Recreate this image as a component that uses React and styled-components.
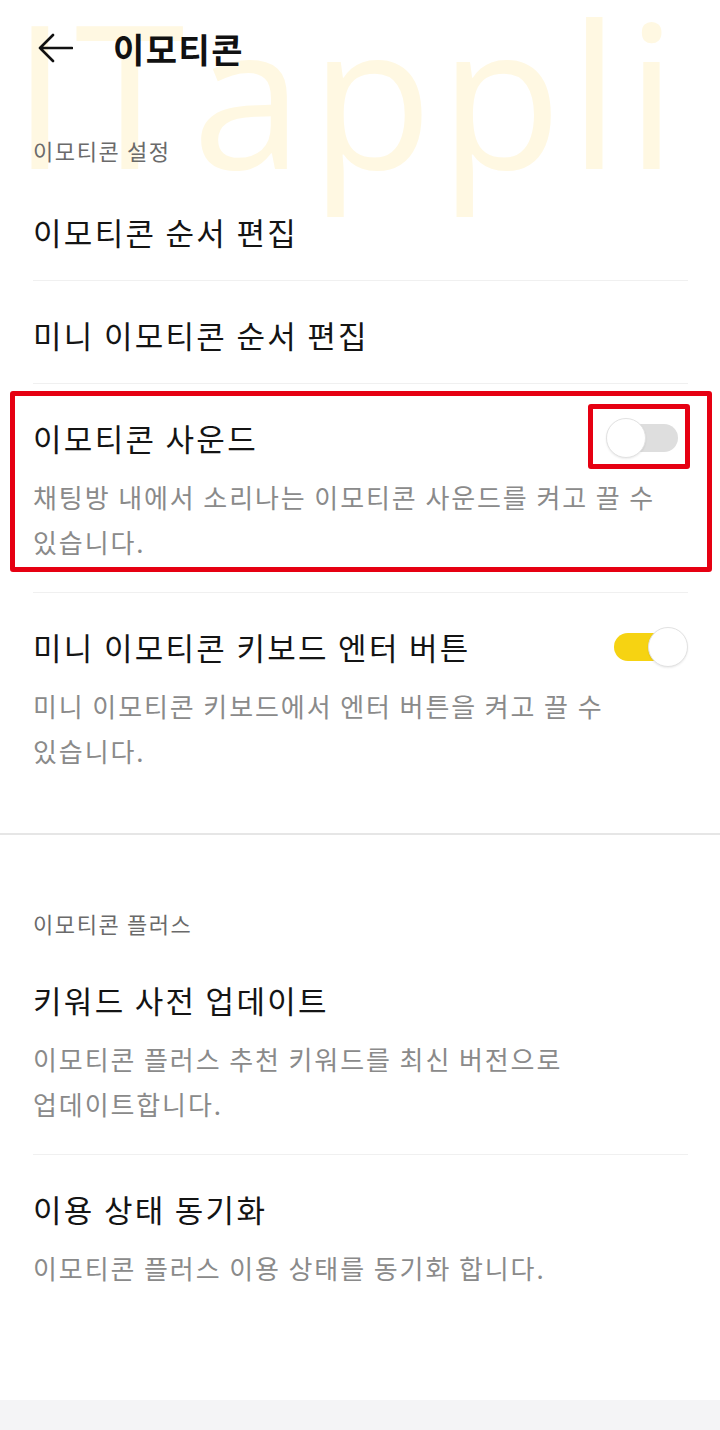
import React from "react";
import styled, { createGlobalStyle } from "styled-components";

const GlobalStyle = createGlobalStyle`
  body {
    margin: 0;
    background: #ffffff;
    font-family: "Noto Sans CJK KR", "Noto Sans", sans-serif;
    color: #111111;
    word-break: keep-all;
  }
`;

const Page = styled.div`
  position: relative;
  display: flex;
  flex-direction: column;
  min-height: 1430px;
  background: #ffffff;
  overflow: hidden;
`;

const Watermark = styled.div`
  position: absolute;
  top: -38px;
  left: 12px;
  z-index: 0;
  font-family: "Open Sans", sans-serif;
  font-size: 200px;
  line-height: 1.3;
  letter-spacing: 7px;
  color: #fff8e2;
  pointer-events: none;
  user-select: none;
`;

const Content = styled.div`
  position: relative;
  z-index: 1;
  flex: 1;
`;

const Header = styled.header`
  display: flex;
  align-items: center;
  gap: 40px;
  height: 96px;
  padding-left: 37px;
`;

const BackButton = styled.button`
  display: flex;
  padding: 0;
  border: none;
  background: none;
  color: #111111;
`;

const Title = styled.h1`
  margin: 0;
  font-size: 34px;
  font-weight: 700;
  letter-spacing: 1.5px;
`;

const Section = styled.section`
  padding: ${(p) => p.$top}px 0 32px;
  border-bottom: ${(p) => (p.$divider ? "2px solid #e6e6e6" : "none")};
`;

const SectionLabel = styled.div`
  padding: 0 33px;
  margin-bottom: ${(p) => p.$gap}px;
  font-size: 22px;
  line-height: 30px;
  letter-spacing: 1.6px;
  color: #6a6a6a;
`;

const Row = styled.div`
  position: relative;
  margin: 0 32px 0 33px;
  padding: 34px 0 28px;
  border-bottom: ${(p) => (p.$last ? "none" : "1px solid #f0f0f0")};

  ${(p) =>
    p.$marked &&
    `
    &::after {
      content: "";
      position: absolute;
      top: 7px;
      bottom: 20px;
      left: -23px;
      right: -24px;
      border: 5px solid #e60012;
      border-radius: 3px;
      pointer-events: none;
    }
  `}
`;

const RowHead = styled.div`
  display: flex;
  align-items: center;
  justify-content: space-between;
  height: 40px;
`;

const RowTitle = styled.div`
  font-size: 31px;
  line-height: 40px;
  letter-spacing: 2.3px;
  color: #141414;
`;

const RowDesc = styled.div`
  margin-top: 16px;
  font-size: 26px;
  line-height: 45px;
  letter-spacing: 1.9px;
  color: #8a8a8a;
`;

const Switch = styled.div`
  position: relative;
  flex: none;
  width: 82px;
  height: 40px;

  ${(p) =>
    p.$marked &&
    `
    &::after {
      content: "";
      position: absolute;
      top: -14px;
      bottom: -11px;
      left: -18px;
      right: -2px;
      border: 5px solid #e60012;
      border-radius: 3px;
    }
  `}
`;

const Track = styled.div`
  position: absolute;
  top: 6px;
  left: 8px;
  right: 10px;
  height: 28px;
  border-radius: 14px;
  background: ${(p) => (p.$on ? "#f6d312" : "#dedede")};
`;

const Knob = styled.div`
  position: absolute;
  top: 0;
  ${(p) => (p.$on ? "right: 0;" : "left: 0;")}
  width: 38px;
  height: 38px;
  border-radius: 50%;
  background: #ffffff;
  border: 1px solid #e2e2e2;
  box-shadow: 0 1px 2px rgba(0, 0, 0, 0.08);
`;

const Footer = styled.div`
  height: 30px;
  background: #f4f4f6;
`;

const ArrowIcon = () => (
  <svg width="36" height="30" viewBox="0 0 36 30" fill="none">
    <path
      d="M35 15H3M16 2L3 15l13 13"
      stroke="currentColor"
      strokeWidth="2.6"
      strokeLinecap="round"
      strokeLinejoin="round"
    />
  </svg>
);

const Toggle = ({ on, marked }) => (
  <Switch $marked={marked}>
    <Track $on={on} />
    <Knob $on={on} />
  </Switch>
);

const SettingRow = ({ title, desc, toggle, on, marked, last }) => (
  <Row $marked={marked} $last={last}>
    <RowHead>
      <RowTitle>{title}</RowTitle>
      {toggle && <Toggle on={on} marked={marked} />}
    </RowHead>
    {desc && <RowDesc>{desc}</RowDesc>}
  </Row>
);

const App = () => {
  return (
    <>
      <GlobalStyle />
      <Page>
        <Watermark>ITappli</Watermark>
        <Content>
          <Header>
            <BackButton>
              <ArrowIcon />
            </BackButton>
            <Title>이모티콘</Title>
          </Header>

          <Section $top={39} $divider>
            <SectionLabel $gap={13}>이모티콘 설정</SectionLabel>
            <SettingRow title="이모티콘 순서 편집" />
            <SettingRow title="미니 이모티콘 순서 편집" />
            <SettingRow
              title="이모티콘 사운드"
              desc="채팅방 내에서 소리나는 이모티콘 사운드를 켜고 끌 수 있습니다."
              toggle
              marked
            />
            <SettingRow
              title="미니 이모티콘 키보드 엔터 버튼"
              desc="미니 이모티콘 키보드에서 엔터 버튼을 켜고 끌 수 있습니다."
              toggle
              on
              last
            />
          </Section>

          <Section $top={73}>
            <SectionLabel $gap={8}>이모티콘 플러스</SectionLabel>
            <SettingRow
              title="키워드 사전 업데이트"
              desc="이모티콘 플러스 추천 키워드를 최신 버전으로 업데이트합니다."
            />
            <SettingRow
              title="이용 상태 동기화"
              desc="이모티콘 플러스 이용 상태를 동기화 합니다."
              last
            />
          </Section>
        </Content>
        <Footer />
      </Page>
    </>
  );
};

export default App;
